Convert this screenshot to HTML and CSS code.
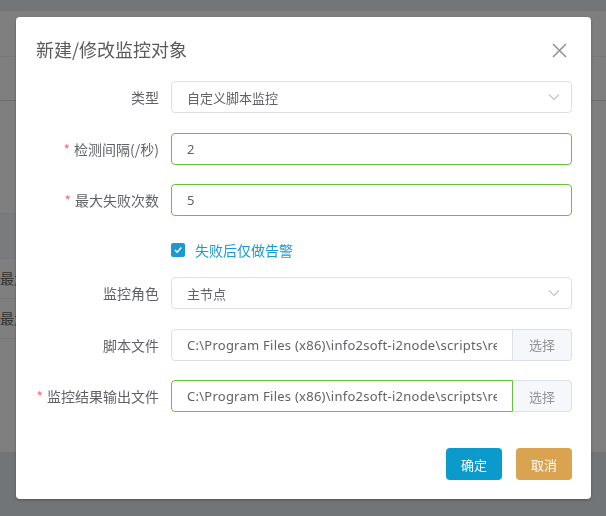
FILE: index.html
```html
<!DOCTYPE html>
<html lang="zh-CN">
<head>
<meta charset="utf-8">
<title>新建/修改监控对象</title>
<link rel="stylesheet" href="styles.css">
</head>
<body>
<div class="page">
  <div class="topbar"></div>
  <div class="main">
    <div class="toolbar"></div>
    <div class="filters"></div>
    <div class="gap"></div>
    <div class="table">
      <div class="thead"></div>
      <div class="trow">最大失败次数</div>
      <div class="trow">最大失败次数</div>
    </div>
  </div>
  <div class="footer"></div>
</div>

<div class="mask"></div>

<div class="dialog">
  <div class="dialog-header">
    <span class="dialog-title">新建/修改监控对象</span>
    <button class="dialog-close" aria-label="关闭">
      <svg width="15" height="15" viewBox="0 0 15 15"><path d="M1 1 L14 14 M14 1 L1 14" stroke="#909399" stroke-width="1.6" fill="none"/></svg>
    </button>
  </div>
  <div class="dialog-body">
    <div class="form-item">
      <label class="form-label">类型</label>
      <div class="field select">
        <span class="field-text">自定义脚本监控</span>
        <svg class="arrow" width="12" height="8" viewBox="0 0 12 8"><path d="M1 1.5 L6 6.5 L11 1.5" stroke="#c0c4cc" stroke-width="1.2" fill="none"/></svg>
      </div>
    </div>
    <div class="form-item">
      <label class="form-label"><span class="req">*</span>检测间隔(/秒)</label>
      <input class="field ok" value="2">
    </div>
    <div class="form-item">
      <label class="form-label"><span class="req">*</span>最大失败次数</label>
      <input class="field ok" value="5">
    </div>
    <div class="form-item check-item">
      <label class="form-label"></label>
      <label class="checkbox">
        <span class="box"><svg width="14" height="14" viewBox="0 0 14 14"><path d="M4 7 L6.2 9.2 L10.3 4.6" stroke="#fff" stroke-width="1.5" fill="none"/></svg></span>
        <span class="check-text">失败后仅做告警</span>
      </label>
    </div>
    <div class="form-item">
      <label class="form-label">监控角色</label>
      <div class="field select">
        <span class="field-text">主节点</span>
        <svg class="arrow" width="12" height="8" viewBox="0 0 12 8"><path d="M1 1.5 L6 6.5 L11 1.5" stroke="#c0c4cc" stroke-width="1.2" fill="none"/></svg>
      </div>
    </div>
    <div class="form-item">
      <label class="form-label">脚本文件</label>
      <div class="group">
        <input class="field grouped" value="C:\Program Files (x86)\info2soft-i2node\scripts\result.bat">
        <button class="append">选择</button>
      </div>
    </div>
    <div class="form-item">
      <label class="form-label"><span class="req">*</span>监控结果输出文件</label>
      <div class="group">
        <input class="field grouped ok" value="C:\Program Files (x86)\info2soft-i2node\scripts\result.txt">
        <button class="append">选择</button>
      </div>
    </div>
  </div>
  <div class="dialog-footer">
    <button class="btn btn-primary">确定</button>
    <button class="btn btn-warning">取消</button>
  </div>
</div>
</body>
</html>
```
FILE: styles.css
```css
* { box-sizing: border-box; }
html, body { margin: 0; padding: 0; }
body {
  font-family: "Noto Sans CJK SC", "Noto Sans", sans-serif;
  font-size: 14px;
  color: #606266;
  width: 606px;
  height: 516px;
  overflow: hidden;
}

/* background page */
.page { width: 606px; height: 516px; display: flex; flex-direction: column; }
.topbar { height: 11px; background: #e6ecf2; }
.main { flex: 1; background: #ffffff; display: flex; flex-direction: column; }
.toolbar { height: 46px; border-bottom: 1px solid #eeeef2; }
.filters { height: 44px; border-bottom: 1px solid #d6d6da; }
.gap { height: 112px; }
.table { width: 590px; }
.thead { height: 46px; background: #f5f6fa; border-top: 1px solid #ebeef5; border-bottom: 1px solid #ebeef5; }
.trow {
  height: 40px; line-height: 39px; border-bottom: 1px solid #ebeef5;
  font-size: 14px; color: #666; white-space: nowrap; overflow: hidden;
}
.footer { height: 64px; background: #e4eaf0; }

.mask { position: fixed; inset: 0; background: rgba(0, 0, 0, 0.5); }

/* dialog */
.dialog {
  position: fixed;
  left: 16px; top: 17px;
  width: 575px; height: 482px;
  background: #fff;
  border-radius: 4px;
  box-shadow: 0 1px 3px rgba(0,0,0,.3);
  display: flex; flex-direction: column;
  padding: 20px 19px 19px 20px;
}
.dialog-header { height: 24px; display: flex; align-items: center; justify-content: space-between; }
.dialog-title { font-size: 18px; line-height: 24px; color: #5a5a5a; }
.dialog-close {
  border: 0; background: none; padding: 0; margin: 2px 5px 0 0;
  width: 15px; height: 15px; display: flex; cursor: pointer;
}

.dialog-body { padding-top: 20px; flex: 1; display: flex; flex-direction: column; }
.form-item { display: flex; align-items: center; height: 32px; margin-bottom: 19.5px; }
.form-item.check-item { height: 28px; margin-bottom: 13.5px; }
.form-label {
  width: 135px; flex: none; text-align: right; padding-right: 12px;
  font-size: 14px; color: #606266; white-space: nowrap;
}
.req { color: #f56c6c; margin-right: 4px; }

.field {
  flex: 1; min-width: 0; height: 32px;
  border: 1px solid #dcdfe6; border-radius: 4px;
  padding: 0 15px;
  font-family: "Noto Sans", "Noto Sans CJK SC", sans-serif;
  font-size: 13px; letter-spacing: 0.25px; color: #606266;
  background: #fff; outline: none;
  display: flex; align-items: center;
}
.field.ok { border-color: #67c23a; }
.select { justify-content: space-between; padding-right: 11px; font-family: "Noto Sans CJK SC", sans-serif; letter-spacing: 0; }
.field-text { white-space: nowrap; }

.group { flex: 1; display: flex; height: 32px; min-width: 0; }
.field.grouped { border-top-right-radius: 0; border-bottom-right-radius: 0; }
.append {
  width: 59px; flex: none; height: 32px;
  border: 1px solid #dcdfe6; border-left: 0;
  border-radius: 0 4px 4px 0;
  background: #f5f7fa; color: #909399;
  font-family: "Noto Sans CJK SC", sans-serif; font-size: 13px; padding: 0;
}

.checkbox { display: flex; align-items: center; gap: 10px; }
.box {
  width: 14px; height: 14px; border-radius: 2px; background: #1a9ad2;
  display: flex;
}
.check-text { font-size: 14px; color: #1a9ad2; }

.dialog-footer { display: flex; justify-content: flex-end; gap: 14px; }
.btn {
  width: 56px; height: 32px; border: 0; border-radius: 4px;
  font-family: "Noto Sans CJK SC", sans-serif; font-size: 13px; color: #fff; padding: 0;
}
.btn-primary { background: #0a9acc; }
.btn-warning { background: #d9a34f; }
```
